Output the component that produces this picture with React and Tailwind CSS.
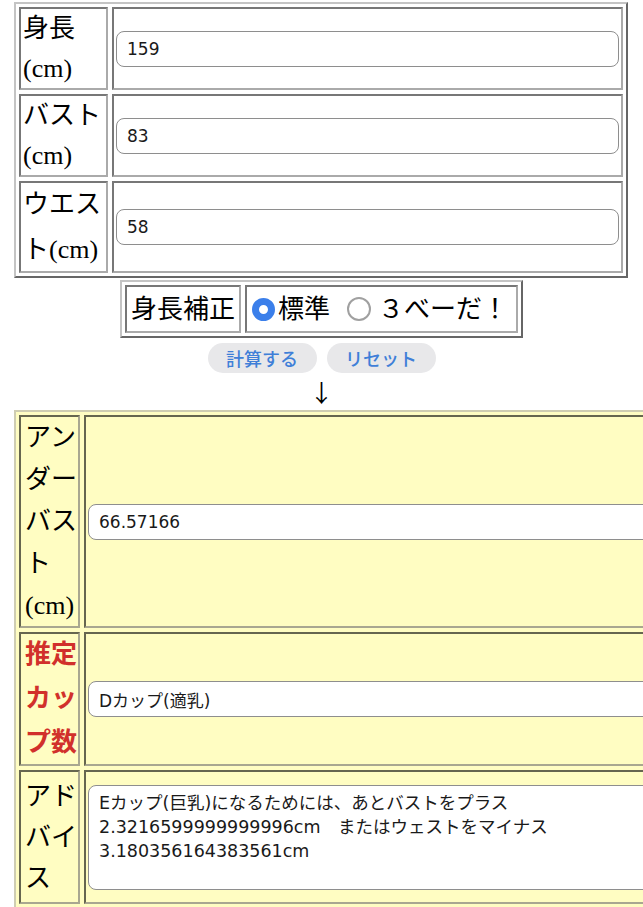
const serif = "font-['Liberation_Serif','Noto_Sans_CJK_JP',serif]";
const sans = "font-['DejaVu_Sans','Noto_Sans_CJK_JP',sans-serif]";

const inputCls =
  "w-full h-[36px] rounded-[8px] border border-[#8e8e8e] bg-white px-[10px] text-[17px] text-[#1a1a1a] outline-none " + sans;

function Row({ label, value, height, lead }) {
  return (
    <div className="flex gap-[4px]" style={{ height }}>
      <div className={`w-[89px] shrink-0 border-2 border-[#777] border-r-[#aaa] border-b-[#aaa] pl-[2px] flex flex-col justify-center text-[26px] text-black ${serif}`} style={{ lineHeight: lead }}>
        {label}
      </div>
      <div className="flex-1 border-2 border-[#777] border-r-[#aaa] border-b-[#aaa] px-[2px] flex items-center">
        <input className={inputCls} defaultValue={value} />
      </div>
    </div>
  );
}

function YCell({ label, lead, red, height, children }) {
  return (
    <div className="flex gap-[4px]" style={{ height }}>
      <div
        className={`w-[61px] shrink-0 border-2 border-[#66664f] border-r-[#a9a790] border-b-[#a9a790] pl-[4px] flex flex-col justify-center text-[26px] ${serif} ${red ? "text-[#d1302b] font-bold" : "text-black"}`}
        style={{ lineHeight: lead }}
      >
        {label}
      </div>
      <div className="flex-1 border-2 border-[#66664f] border-r-[#a9a790] border-b-[#a9a790] px-[2px] flex items-center">
        {children}
      </div>
    </div>
  );
}

export default function App() {
  return (
    <div className="w-[643px] h-[907px] overflow-hidden bg-white">
      {/* 入力テーブル */}
      <div className="mt-[2px] ml-[14px] w-[614px] border-2 border-[#c4c4c4] border-r-[#666] border-b-[#666] p-[3px] flex flex-col gap-[4px]">
        <Row label={<><span>身長</span><span>(cm)</span></>} value="159" height={83} lead="40px" />
        <Row label={<><span>バスト</span><span>(cm)</span></>} value="83" height={83} lead="40px" />
        <Row label={<><span>ウエス</span><span>ト(cm)</span></>} value="58" height={92} lead="45px" />
      </div>

      {/* 身長補正 */}
      <div className="mx-auto mt-[2px] w-[403px] border-2 border-[#c4c4c4] border-r-[#666] border-b-[#666] p-[3px] flex gap-[4px]">
        <div className={`w-[116px] h-[48px] border-2 border-[#777] border-r-[#aaa] border-b-[#aaa] flex items-center justify-center text-[26px] ${serif}`}>
          身長補正
        </div>
        <div className={`flex-1 h-[48px] border-2 border-[#777] border-r-[#aaa] border-b-[#aaa] pl-[5px] flex items-center text-[26px] ${serif}`}>
          <span className="w-[23px] h-[23px] rounded-full border-[7px] border-[#3b7fea] bg-white shrink-0" />
          <span className="ml-[3px]">標準</span>
          <span className="ml-[17px] w-[24px] h-[24px] rounded-full border-2 border-[#a0a0a0] bg-white shrink-0" />
          <span className="ml-[7px]">３べーだ！</span>
        </div>
      </div>

      {/* ボタン */}
      <div className="mt-[5px] flex justify-center gap-[10px]">
        <button className="w-[109px] h-[30px] rounded-full bg-[#e8e8ea] text-[18px] leading-[30px] font-medium text-[#3f7fd8] font-['Noto_Sans_CJK_JP',sans-serif]">
          計算する
        </button>
        <button className="w-[109px] h-[30px] rounded-full bg-[#e8e8ea] text-[18px] leading-[30px] font-medium text-[#3f7fd8] font-['Noto_Sans_CJK_JP',sans-serif]">
          リセット
        </button>
      </div>

      <div className="h-[37px] flex items-center justify-center text-[24px] leading-[37px] text-black font-['Noto_Sans_CJK_JP',sans-serif]">
        ↓
      </div>

      {/* 結果テーブル */}
      <div className="ml-[14px] w-[720px] bg-[#fffdc2] border-2 border-[#cfcdb2] border-r-[#66664f] border-b-[#66664f] p-[3px] flex flex-col gap-[4px]">
        <YCell
          height={213}
          lead="42px"
          label={<><span>アン</span><span>ダー</span><span>バス</span><span>ト</span><span>(cm)</span></>}
        >
          <input className={inputCls} defaultValue="66.57166" />
        </YCell>
        <YCell height={134} lead="44px" red label={<><span>推定</span><span>カッ</span><span>プ数</span></>}>
          <input className={inputCls} defaultValue="Dカップ(適乳)" />
        </YCell>
        <YCell height={134} lead="41px" label={<><span>アド</span><span>バイ</span><span>ス</span></>}>
          <textarea
            className={`w-full h-[105px] resize-none rounded-[8px] border border-[#8e8e8e] bg-white px-[10px] pt-[5px] text-[17.5px] leading-[24px] text-[#1a1a1a] whitespace-pre outline-none overflow-hidden ${sans}`}
            defaultValue={"Eカップ(巨乳)になるためには、あとバストをプラス\n2.3216599999999996cm　またはウェストをマイナス\n3.180356164383561cm"}
          />
        </YCell>
      </div>
    </div>
  );
}
